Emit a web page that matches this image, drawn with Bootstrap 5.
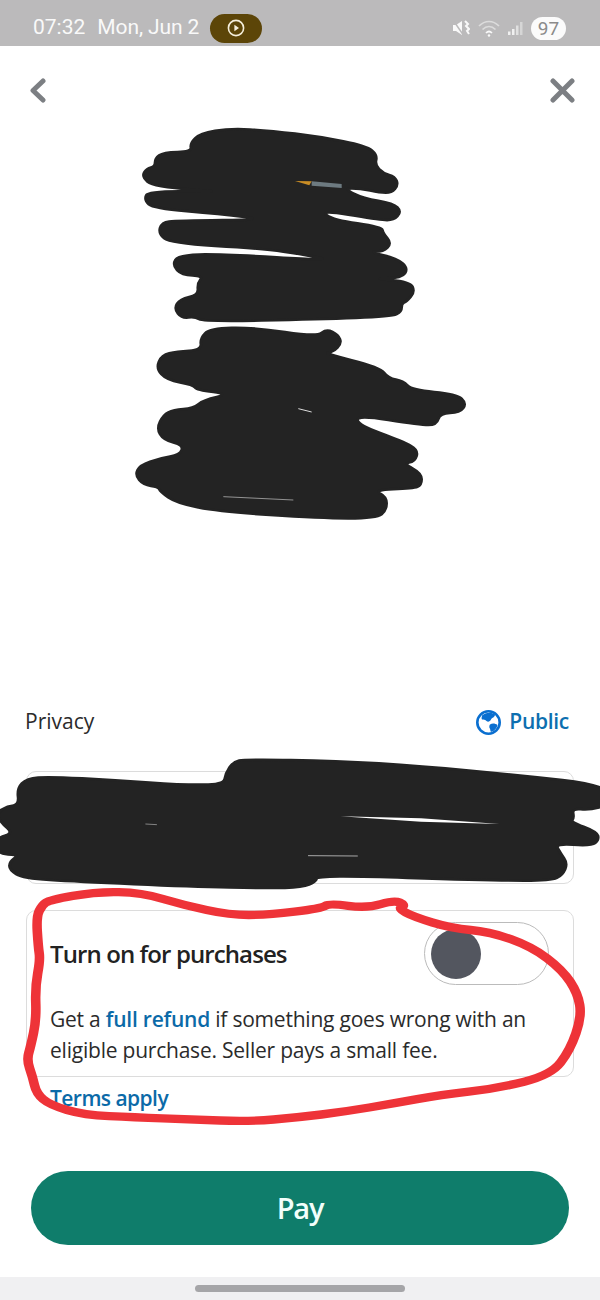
<!DOCTYPE html>
<html lang="en">
<head>
    <meta charset="UTF-8">
    <meta name="viewport" content="width=device-width, initial-scale=1.0">
    <title>Pay</title>
    <link href="https://cdn.jsdelivr.net/npm/bootstrap@5.3.0/dist/css/bootstrap.min.css" rel="stylesheet">
    <style>
        body { background: #fff; font-family: "Open Sans", "Noto Sans", sans-serif; color: #2b2b2b; }
        .phone { width: 600px; height: 1300px; position: relative; overflow: hidden; }
        .status-line { height: 46px; background: #bbbabb; color: #f9f9f9; font-family: Roboto, sans-serif; font-size: 21px; padding: 10px 34px 0 33px; }
        .status-date { margin-left: 12px; letter-spacing: -.1px; }
        .rec-pill { width: 52px; height: 29px; background: #5c4508; margin-left: 11px; }
        .batt-pill { width: 35px; height: 23px; background: #fbfbfb; color: #8b8b8b; font-size: 19px; line-height: 23px; margin-left: 8px; }
        .head-line { height: 74px; padding: 14px 25px 0 30px; }
        .name-block { height: 577px; padding-left: 120px; }
        .privacy-line { height: 50px; padding: 0 31px 0 25px; font-size: 21px; }
        .public-link { color: #0d6fb0; font-weight: 600; font-size: 21px; letter-spacing: -.3px; }
        .pay-box { height: 113px; margin: 24px 26px 0; border-color: #dcdcdc; border-radius: 10px; }
        .protect-box { height: 167px; margin: 26px 26px 0; border-color: #dcdcdc; border-radius: 10px; padding: 11px 24px 0 23px; }
        .protect-title { font-size: 24px; font-weight: 600; color: #222; letter-spacing: -.9px; }
        .protect-toggle { width: 125px; height: 63px; border: 1px solid #bbb; padding-left: 6px; }
        .toggle-knob { width: 50px; height: 50px; background: #53565f; }
        .protect-text { font-size: 21px; line-height: 31px; margin-top: 19px; letter-spacing: -.22px; }
        .blue-word { color: #0b6aa8; font-weight: 600; text-decoration: none; }
        .terms-link { font-size: 21px; margin: 7px 0 0 50px; line-height: 28px; letter-spacing: -.55px; }
        .pay-btn { display: block; width: 538px; height: 74px; margin: 59px 0 0 31px; background: #0f7d6b; border: 0; color: #f2fffb; font-size: 29px; font-weight: 600; letter-spacing: -1.2px; }
        .gesture-line { position: absolute; left: 0; right: 0; bottom: 0; height: 23px; background: #f0f0f2; }
        .gesture-bar { width: 210px; height: 7px; background: #a5a5a8; margin-top: 8px; }
        .scribble-over { position: absolute; left: 0; width: 600px; }
        .ink { fill: #232323; stroke: #232323; stroke-width: 8; stroke-linejoin: round; }
        .marker { fill: none; stroke: #ee3338; stroke-width: 25; stroke-linejoin: round; }
    </style>
</head>
<body>
<div class="phone">

    <!-- status bar -->
    <div class="status-line d-flex align-items-center">
        <span>07:32</span>
        <span class="status-date">Mon, Jun 2</span>
        <span class="rec-pill rounded-pill d-flex align-items-center justify-content-center">
            <svg width="18" height="18" viewBox="0 0 18 18"><circle cx="9" cy="9" r="7.6" fill="none" stroke="#f5efdc" stroke-width="1.6"/><path d="M7.4 5.8 12 9l-4.6 3.2z" fill="#f5efdc"/></svg>
        </span>
        <span class="ms-auto d-flex align-items-center">
            <svg width="18" height="18" viewBox="0 0 18 18" fill="#f9f9f9"><path d="M1 6h3l6-4v14l-6-4H1z"/><path d="M1 1l11 16" stroke="#bbbabb" stroke-width="1.4"/><path d="M13 2l3 3-2 2 3 3-2 2 2 3" fill="none" stroke="#f9f9f9" stroke-width="2"/></svg>
            <svg class="ms-2" width="22" height="17" viewBox="0 0 22 17" fill="none" stroke="#dcdcdc" stroke-width="1.7"><path d="M1 6c6-6 14-6 20 0"/><path d="M4.500 9.500c4-4 9-4 13 0"/><path d="M8 13c2-2 4-2 6 0" stroke="#f9f9f9"/><circle cx="11" cy="15.500" r="1.200" fill="#f9f9f9" stroke="none"/></svg>
            <svg class="ms-2" width="15" height="13" viewBox="0 0 15 13" fill="#f0f0f0"><rect x="0" y="9.500" width="2.500" height="3.500"/><rect x="4" y="7" width="2.500" height="6"/><rect x="8" y="3.500" width="2.500" height="9.500" fill="#e0e0e0"/><rect x="12" y="0" width="2.500" height="13" fill="#d6d6d6"/></svg>
            <span class="batt-pill rounded-pill text-center">97</span>
        </span>
    </div>

    <!-- back and close -->
    <div class="head-line d-flex align-items-center justify-content-between">
        <svg width="16" height="25" viewBox="0 0 16 25" fill="none" stroke="#7c7f83" stroke-width="5" stroke-linecap="round" stroke-linejoin="round"><path d="M13 3 3 12.500 13 22"/></svg>
        <svg width="25" height="25" viewBox="0 0 25 25" fill="none" stroke="#7c7f83" stroke-width="5" stroke-linecap="round"><path d="M3 3l19 19M22 3 3 22"/></svg>
    </div>

    <!-- scribbled out name -->
    <div class="name-block">
        <svg width="360" height="410" viewBox="0 0 1080 1230" class="d-block">
            <path class="ink" data-pts="210 70 240 40 330 25 450 32 600 50 740 78 772 105 765 135 790 160 825 170 835 195 815 218 780 218 720 205 670 205 730 235 820 250 845 275 820 302 770 298 600 270 640 300 785 320 790 340 815 370 790 395 745 395 830 415 865 445 845 475 755 475 870 485 885 515 860 545 845 550 845 575 815 590 600 598 250 605 225 590 185 595 162 565 180 538 235 525 232 490 250 468 185 465 157 435 175 405 300 402 640 422 560 405 420 385 150 370 115 340 125 308 170 302 445 299 300 282 100 265 72 240 85 212 335 217 100 200 65 170 80 145 105 140 105 115 130 97 215 95"/>
            <path class="ink" data-pts="240 655 270 625 400 622 590 650 620 627 655 645 665 670 640 695 610 700 780 742 805 775 850 783 875 810 1010 822 1040 850 1020 878 960 880 950 915 900 915 710 885 715 915 850 965 895 990 885 1025 850 1030 905 1060 905 1095 880 1105 760 1110 800 1130 800 1170 770 1195 600 1195 300 1175 170 1150 120 1115 115 1100 70 1095 45 1065 60 1035 120 1015 180 1005 190 975 130 960 110 925 130 885 160 870 220 865 250 840 330 822 230 810 220 795 140 780 108 745 125 705 170 695 245 690"/>
            <path d="M575 184 665 192 665 204 575 197z" fill="#6d7a80"/>
            <path d="M525 183 575 184 568 196z" fill="#c98d25"/>
            <path d="M310 1130 520 1140" stroke="#ccc" stroke-width="2" fill="none"/>
            <path d="M535 866 575 876" stroke="#ddd" stroke-width="3" fill="none"/>
        </svg>
    </div>

    <div class="privacy-line d-flex align-items-center justify-content-between">
        <span>Privacy</span>
        <span class="public-link d-flex align-items-center gap-2">
            <svg width="25" height="25" viewBox="0 0 25 25"><circle cx="12.500" cy="12.500" r="11.200" fill="#fff" stroke="#0a6fd0" stroke-width="2.600"/><path d="M6 5.500c3-3 9-4 13-1 0 3-3 3-4 5-1 2-3 3-4.500 1.500-1-1.500-3-1.500-4.500-1.500-1-1 0-3 0-4z" fill="#0a6fd0"/><path d="M14 14.500c2-1.500 5-1.500 7.500.5-.5 3-3 6-6.500 7-1-1.500-.5-3-1.500-4-.5-1.500 0-3 .5-3.500z" fill="#0a6fd0"/></svg>
            Public
        </span>
    </div>

    <div class="card pay-box"></div>

    <div class="card protect-box">
        <div class="d-flex align-items-center justify-content-between">
            <span class="protect-title">Turn on for purchases</span>
            <span class="protect-toggle rounded-pill d-flex align-items-center"><span class="toggle-knob rounded-circle"></span></span>
        </div>
        <div class="protect-text">Get a <a href="#" class="blue-word">full refund</a> if something goes wrong with an eligible purchase. Seller pays a small fee.</div>
    </div>
    <div class="terms-link"><a href="#" class="blue-word">Terms apply</a></div>

    <button class="btn rounded-pill pay-btn">Pay</button>

    <div class="gesture-line"><div class="gesture-bar rounded-pill mx-auto"></div></div>

    <!-- scribble over the first card -->
    <svg class="scribble-over" style="top:690px" height="210" viewBox="0 0 1568 630" preserveAspectRatio="none">
        <path class="ink" data-pts="45 295 70 265 130 260 300 270 480 285 585 283 590 250 610 215 640 208 880 212 1100 228 1350 255 1590 285 1590 345 1540 360 1495 355 1500 385 1490 395 1560 425 1565 450 1545 468 1450 460 1465 490 1483 520 1470 555 1440 572 1300 572 830 555 825 575 790 592 700 595 500 590 200 575 60 565 25 540 25 515 50 495 10 493 -10 480 -10 445 35 430 5 400 -10 370 20 348 50 345"/>
        <path d="M890 379 1100 385 1305 402 1100 395z" fill="#fff"/>
        <path d="M805 497 935 498" stroke="#ddd" stroke-width="2" fill="none"/>
        <path d="M380 402 410 404" stroke="#aaa" stroke-width="2" fill="none"/>
    </svg>

    <!-- red marker round the second card -->
    <svg class="scribble-over" style="top:880px" height="250" viewBox="0 0 1568 750" preserveAspectRatio="none">
        <path class="marker" data-pts="110 75 95 110 100 200 105 240 92 320 95 420 80 500 70 540 85 590 95 640 130 675 220 705 350 712 500 718 650 725 780 712 900 695 1030 670 1150 645 1300 625 1440 585 1490 510 1520 410 1510 340 1470 270 1390 200 1280 155 1180 145 1080 110 1040 85 1060 75 1030 60 960 85 860 70 840 85 700 105 600 105 480 75 370 38 250 35 130 60"/>
    </svg>

</div>
<script src="https://cdn.jsdelivr.net/npm/bootstrap@5.3.0/dist/js/bootstrap.bundle.min.js"></script>
<script>
    // round off the hand traced outlines: curve through midpoints of each edge
    document.querySelectorAll("path[data-pts]").forEach(p => {
        let n = p.dataset.pts.trim().split(/\s+/).map(Number);
        let pts = [];
        for (let i = 0; i < n.length; i += 2) pts.push([n[i], n[i + 1]]);
        let mid = (a, b) => ((a[0] + b[0]) / 2) + " " + ((a[1] + b[1]) / 2);
        let d = "M" + mid(pts[pts.length - 1], pts[0]);
        pts.forEach((pt, i) => {
            d += " Q" + pt[0] + " " + pt[1] + " " + mid(pt, pts[(i + 1) % pts.length]);
        });
        p.setAttribute("d", d + "z");
    });
</script>
</body>
</html>
